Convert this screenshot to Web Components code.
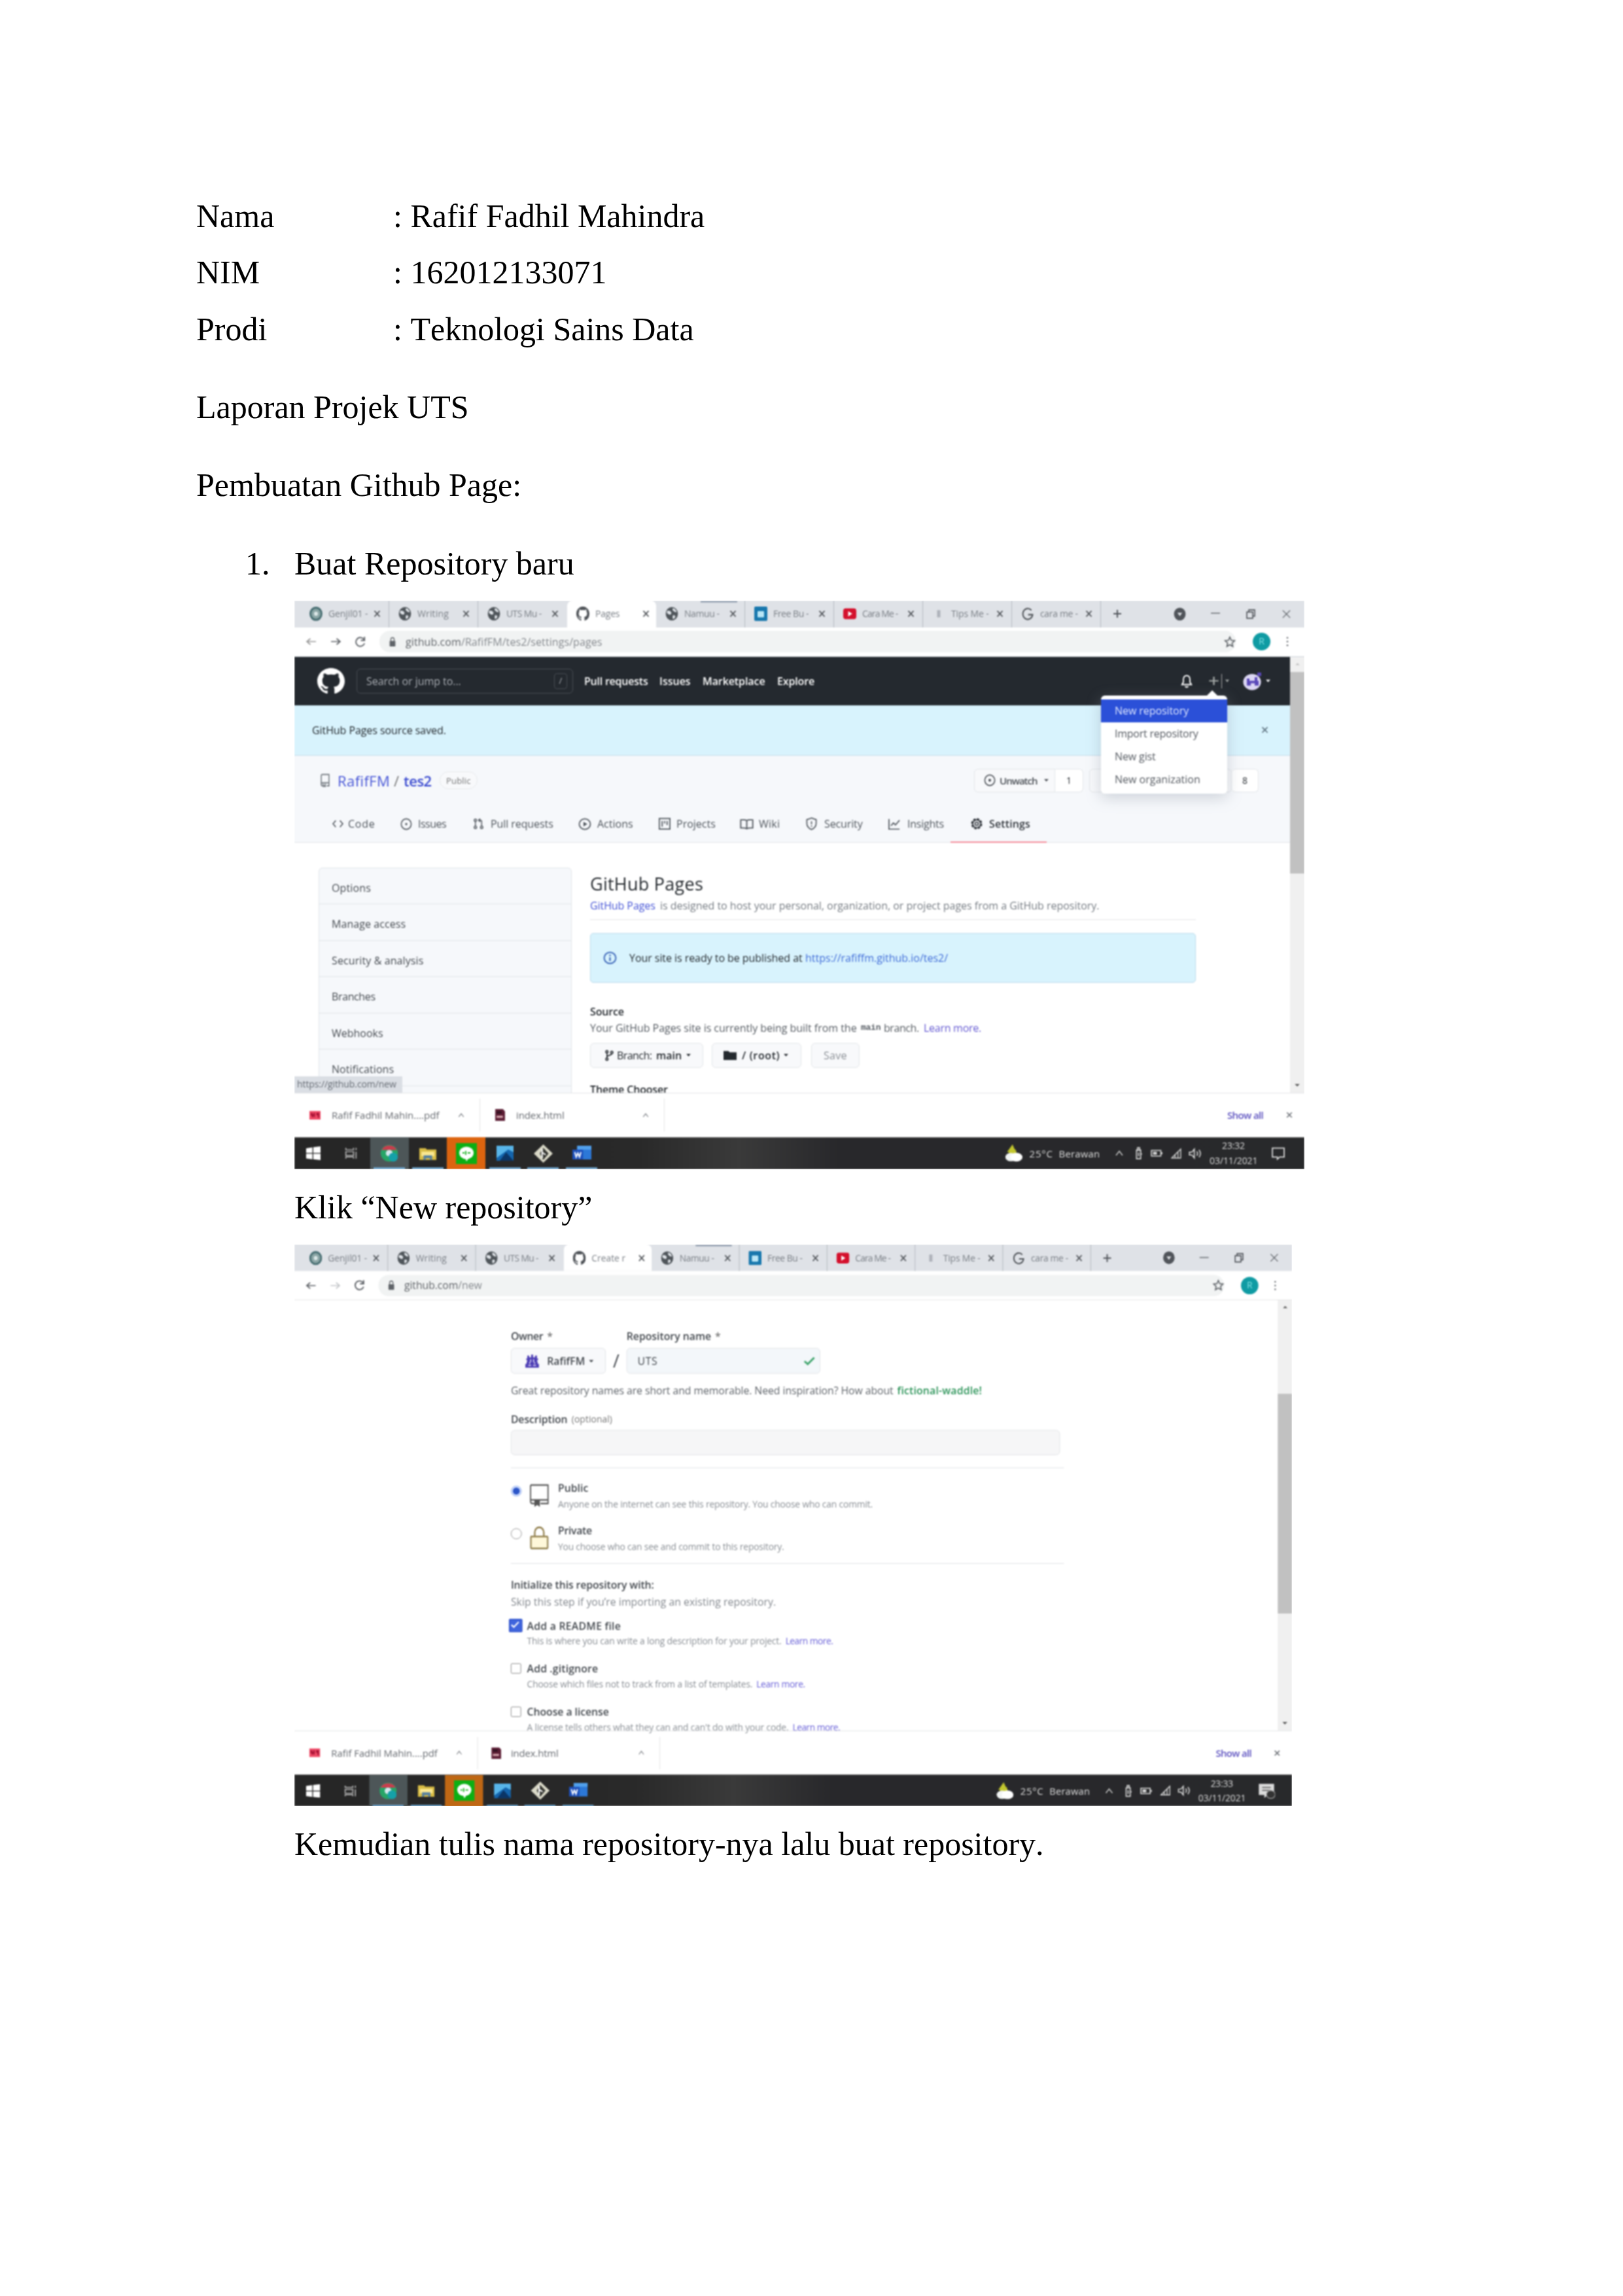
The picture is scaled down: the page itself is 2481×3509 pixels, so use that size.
<!DOCTYPE html>
<html lang="id">
<head>
<meta charset="utf-8">
<title>Laporan Projek UTS</title>
<style>
body{margin:0;background:#fff;width:2481px;height:3509px;overflow:hidden}
</style>
</head>
<body>
<report-page>
  <meta-line label="Nama">: Rafif Fadhil Mahindra</meta-line>
  <meta-line label="NIM">: 162012133071</meta-line>
  <meta-line label="Prodi">: Teknologi Sains Data</meta-line>
  <doc-para>Laporan Projek UTS</doc-para>
  <doc-para>Pembuatan Github Page:</doc-para>
  <doc-step number="1.">
    <span slot="title">Buat Repository baru</span>
    <browser-shot kind="settings"><settings-view></settings-view></browser-shot>
    <doc-caption>Klik “New repository”</doc-caption>
    <browser-shot kind="new"><new-repo-view></new-repo-view></browser-shot>
    <doc-caption>Kemudian tulis nama repository-nya lalu buat repository.</doc-caption>
  </doc-step>
</report-page>
<script>
const make = (name, html, after) => customElements.define(name, class extends HTMLElement {
  constructor(){ super(); this.attachShadow({mode:'open'}); }
  connectedCallback(){
    this.shadowRoot.innerHTML = typeof html === 'function' ? html(this) : html;
    if (after) after(this);
  }
});

/* ---------- document ---------- */
make('report-page', `<style>:host{display:flex;flex-direction:column;box-sizing:border-box;width:2481px;height:3509px;padding:287px 300px 0;background:#fff;color:#000;font:50px/86.3px "Liberation Serif",serif;font-variant-ligatures:none;font-kerning:none}</style><slot></slot>`);
make('meta-line', el => `<style>:host{display:flex;height:86.3px;white-space:pre}b{font-weight:400;width:301px}</style><b>${el.getAttribute('label')}</b><slot></slot>`);
make('doc-para', `<style>:host{display:block;margin-top:33px;height:86.3px}</style><slot></slot>`);
make('doc-step', el => `<style>:host{display:block;margin-top:34px}.h{display:flex;height:86px;margin-bottom:13.500px}.n{width:75px;padding-left:75px}.b{padding-left:150px;display:flex;flex-direction:column;align-items:flex-start}</style><div class="h"><span class="n">${el.getAttribute('number')}</span><slot name="title"></slot></div><div class="b"><slot></slot></div>`);
make('doc-caption', `<style>:host{display:block;height:86px;margin:15px 0 14px;white-space:nowrap}</style><slot></slot>`);

/* ---------- icons ---------- */
const S = (d, w=1.5, x='') => `<path d="${d}" fill="none" stroke="currentColor" stroke-width="${w}" ${x}/>`;
const F = (d, c='currentColor') => `<path d="${d}" fill="${c}"/>`;
const ICONS = {
  mark: F('M8 0C3.58 0 0 3.58 0 8c0 3.54 2.29 6.53 5.47 7.59.4.07.55-.17.55-.38 0-.19-.01-.82-.01-1.49-2.01.37-2.53-.49-2.69-.94-.09-.23-.48-.94-.82-1.13-.28-.15-.68-.52-.01-.53.63-.01 1.08.58 1.23.82.72 1.21 1.87.87 2.33.66.07-.52.28-.87.51-1.07-1.78-.2-3.64-.89-3.64-3.95 0-.87.31-1.59.82-2.15-.08-.2-.36-1.02.08-2.12 0 0 .67-.21 2.2.82.64-.18 1.32-.27 2-.27.68 0 1.36.09 2 .27 1.53-1.04 2.2-.82 2.2-.82.44 1.1.16 1.92.08 2.12.51.56.82 1.27.82 2.15 0 3.07-1.87 3.75-3.65 3.95.29.25.54.73.54 1.48 0 1.07-.01 1.93-.01 2.2 0 .21.15.46.55.38A8.013 8.013 0 0016 8c0-4.42-3.58-8-8-8z'),
  x: S('M3 3l10 10M13 3L3 13',2),
  thinx: S('M2 2l12 12M14 2L2 14',1.2),
  ring: `<circle cx="8" cy="8" r="6.8" fill="#8aa5a5" stroke="#456c70" stroke-width="2.2"/><circle cx="8" cy="8" r="2.4" fill="#dce8e8"/>`,
  globe: `<circle cx="8" cy="8" r="7.5" fill="#4f555a"/>`+F('M2 5c2-1 4 0 5 1s0 3-1 3-3-1-4-2zM9 2c3 0 4 2 5 4-2 1-4-1-5-2zM9 10c2-1 4 0 3 2s-3 2-3 1z','#dfe3e8'),
  blue: `<rect width="16" height="16" rx="1.5" fill="#1777ad"/><rect x="4" y="5" width="8" height="7" rx="1" fill="#b9e6f6"/>`,
  yt: `<rect y="2" width="16" height="12" rx="3" fill="#d4102c"/>`+F('M6 5l5 3-5 3z','#fff'),
  dots: `<rect x="6" y="4" width="4" height="8" fill="#aeb2ba"/>`,
  goog: S('M12.5 4.2A6 6 0 1 0 14 9H8.5',1.5),
  plus: S('M8 2v12M2 8h12',2),
  disc: `<circle cx="8" cy="8" r="7.5" fill="currentColor"/>`+F('M5 6.5h6L8 10.5z','#dfe2e6'),
  min: S('M1 7h14',1.4),
  restore: S('M2 5h9v9H2zM5 5V2h9v9h-3',1.6),
  back: S('M15 8H2M7 3L2 8l5 5',1.8),
  fwd: S('M1 8h13M9 3l5 5-5 5',1.8),
  reload: S('M13.5 10A6 6 0 1 1 13 5M13.5 1v5h-5',1.7),
  padlock: `<rect x="3" y="6.5" width="10" height="8.5" rx="1" fill="currentColor"/>`+S('M5 7V4.500a3 3 0 0 1 6 0V7',1.5),
  star: S('M8 1.500l1.900 4.300 4.600.5-3.400 3.200.9 4.700L8 11.800l-4 2.400.9-4.700L1.500 6.300l4.600-.5z',1.5),
  kebab: `<circle cx="8" cy="2.500" r="1.200" fill="currentColor"/><circle cx="8" cy="8" r="1.200" fill="currentColor"/><circle cx="8" cy="13.500" r="1.200" fill="currentColor"/>`,
  bell: S('M8 1.800a4 4 0 0 0-4 4V9l-1.700 2.800h11.400L12 9V5.800a4 4 0 0 0-4-4zM6.300 13.500a1.800 1.800 0 0 0 3.400 0',1.5),
  caret: F('M3 5.500h10L8 11z'),
  repo: S('M2.700 13V2.700A1.500 1.500 0 0 1 4.200 1.200h9V14.500h-3M2.700 12.500c0-1 .7-1.500 1.500-1.500h9M2.700 12.500c0 1.200.7 2 1.800 2M5.500 12v3.500l1.400-1 1.400 1V12',1.3),
  bigrepo: S('M.8 1h14.400v12.700H9M.8 1v11.200c0 1 .6 1.500 1.800 1.500H4M.8 11.200h14.400',1)+F('M4 11.500h4.500V16l-2.200-1.400L4 16z'),
  code: S('M5 3L1 8l4 5M11 3l4 5-4 5',1.5),
  issue: `<circle cx="8" cy="8" r="1.400" fill="currentColor"/><circle cx="8" cy="8" r="6.800" fill="none" stroke="currentColor" stroke-width="1.400"/>`,
  pr: `<g fill="none" stroke="currentColor" stroke-width="1.400"><circle cx="3.500" cy="3.200" r="1.700"/><circle cx="3.500" cy="12.800" r="1.700"/><circle cx="12.500" cy="12.800" r="1.700"/><path d="M3.500 5v6M12.500 11V5q0-1.800-1.800-1.800H8.500M10.300 1L8 3.200l2.300 2.200"/></g>`,
  play: `<circle cx="8" cy="8" r="6.800" fill="none" stroke="currentColor" stroke-width="1.400"/>`+F('M6.300 5v6l4.800-3z'),
  proj: S('M1.500 1.500h13v13h-13zM5 4.500v7M8 4.500v3M11 4.500v5',1.400),
  book: S('M8 3.500C6.500 2.300 4 2.300 1 2.500v10.500c3-.2 5.500-.2 7 1 1.500-1.200 4-1.200 7-1V2.500c-3-.2-5.500-.2-7 1zM8 3.500V14',1.400),
  shield: S('M8 1L2 3v4.500c0 3.500 2.500 6 6 7.500 3.500-1.500 6-4 6-7.500V3zM8 5v3.500M8 10v1.500',1.400),
  graph: S('M1.500 1.500v13h13M4 10l3-3.500 2.500 2.500 5-6',1.400),
  gear: `<circle cx="8" cy="8" r="5.500" fill="none" stroke="currentColor" stroke-width="2.600" stroke-dasharray="2.900 1.420"/><circle cx="8" cy="8" r="4.800" fill="none" stroke="currentColor" stroke-width="1.300"/><circle cx="8" cy="8" r="2" fill="none" stroke="currentColor" stroke-width="1.300"/>`,
  eye: `<circle cx="8" cy="8" r="6.800" fill="none" stroke="currentColor" stroke-width="1.400"/><circle cx="8" cy="8" r="1.800" fill="currentColor"/>`,
  info: `<circle cx="8" cy="8" r="6.800" fill="none" stroke="currentColor" stroke-width="1.500"/>`+S('M8 4v1.700M8 7.200v4.500',1.700),
  branch: `<g fill="none" stroke="currentColor" stroke-width="1.500"><circle cx="4.500" cy="3" r="1.600"/><circle cx="4.500" cy="13" r="1.600"/><circle cx="11.500" cy="4" r="1.600"/><path d="M4.500 4.600v6.800M11.500 5.600c0 3-7 1.500-7 4.500"/></g>`,
  folder: F('M0 2h6l1.500 2H16v11H0z'),
  check: S('M2 8.500l4 4L14 3.500',2.400),
  lock: `<rect x="1.500" y="7" width="13" height="8.200" rx=".5" fill="#fff8da" stroke="#93814f" stroke-width="1.100"/><path d="M4.500 7V4.200a3.500 3.500 0 0 1 7 0V7" fill="none" stroke="#93814f" stroke-width="1.200"/>`,
  avatar: F('M3 2h2v2h2V1h2v3h2V2h2v3h1v2h-1l1 4h1v4H1v-4h1l1-4H2V5h1z','#4b3cb4')+F('M6 6h1v3H6zM9 6h1v3H9zM4 12h3v1H4zM9 12h3v1H9zM5 9h1v2H5zM10 9h1v2h-1z','#efeafc'),
  face: `<circle cx="7" cy="9" r="6.800" fill="#dcd7f4"/>`+F('M3 6h2v2h4V5h2v3h1v4H9v-2H6v2H3z','#5947b8')+F('M11 1h3v3h-3z','#5947b8'),
  up: S('M3 11l5-6 5 6',1.300),
  pdf: F('M0 1h16v14H0z','#ef4a66')+F('M2 4h2l2 4V4h2v8L6 9l-1 3-3-4zM10 4h4v8h-2V8h-2z','#a61135'),
  html: F('M1 0h11l3 3v13H1z','#5b1c33')+F('M3 9h9v3H3z','#d3a4ac')+F('M3 3h7v3H3z','#2e1220'),
  win: F('M0 2.200l7-1v6.500H0zM8 1l8-1v7.700H8zM0 8.600h7v6.400l-7-1zM8 8.600h8V16l-8-1z','#fff'),
  task: S('M2 1v2.500h9V1M2 6h9v5H2zM2 15v-2.200h9V15M14 1v3M14 6v9',1.200),
  chrome: `<circle cx="8" cy="8" r="7.500" fill="#27a567"/>`+F('M1.300 5A7.500 7.500 0 0 1 14.700 5H8z','#c93c4d')+`<circle cx="8" cy="8" r="3" fill="#d6e7ee"/><circle cx="11.500" cy="11.500" r="4" fill="#15a0a8"/>`,
  files: F('M0 2h6l1 1.500h9V15H0z','#d9bd45')+F('M2 6h12v5H2z','#fbe892')+F('M4 10h8v5h-2v-2H6v2H4z','#547fa0'),
  line: `<rect width="16" height="16" fill="#0caf13"/><ellipse cx="8" cy="7.500" rx="5.500" ry="4.700" fill="#fff"/>`+F('M7 11h3l-2 3z','#fff')+S('M5 7.500h1.500M7.500 6v3M9 7.500h2',.9,'style="color:#0caf13"'),
  photos: F('M0 0h16v16H0z','#1465ad')+F('M0 0h16v7L11 4 0 13z','#58b5e9')+F('M3 16l6-9 7 9z','#0b3566'),
  git: F('M8 0l8 8-8 8-8-8z','#dad9c8')+F('M8 3l4.500 5L8 13.500 5 8z','#343530')+S('M7 4v8M7 7l3 2',1.200,'style="color:#fff"'),
  word: F('M4 0h12v14H4z','#2c78d7')+F('M0 4h9v10H0z','#1c4fbb')+S('M2 6.500l1.200 5L4.600 7.500 6 11.500 7.200 6.500',1.100,'style="color:#fff"')+F('M4 0h12v4H4z','#51a0ec'),
  weather: F('M7 0l3 7H2z','#c2c62e')+`<circle cx="7" cy="7" r="3.500" fill="#c2c62e"/><ellipse cx="5.500" cy="11.500" rx="5" ry="3.800" fill="#f2f5f4"/><ellipse cx="10.500" cy="11.500" rx="5.500" ry="4" fill="#fff"/>`,
  usb: S('M5 4h6v11H5zM6.500 4V1h3v3M8 7v5M11 9h2',1.500),
  batt: S('M1 4h12v8H1zM14.500 6.500v3',1.400)+F('M3 6h5v4H3z'),
  net: S('M1 14L14 2v12zM6 14v-4M10 14V6',1.300),
  vol: S('M1 6h3l3-4v12l-3-4H1zM10 5q1.800 3 0 6M12.800 3q3.200 5 0 10',1.300),
  note: S('M1.500 2h13v10.500H9.500L7 15v-2.500H1.500z',1.300),
  noteOn: F('M1 1h14v11H9l-3 3v-3H1z')+S('M4 4.500h8M4 7.500h8',1,'style="color:#555"')+`<circle cx="12" cy="11.500" r="4" fill="#333" stroke="#aaa" stroke-width=".8"/>`,
};
make('ui-icon', el => {
  const w = el.getAttribute('w') || 18, h = el.getAttribute('h') || w;
  return `<style>:host{display:block;flex:none;width:${w}px;height:${h}px}svg{display:block}</style><svg width="${w}" height="${h}" viewBox="0 0 16 16" preserveAspectRatio="none">${ICONS[el.getAttribute('n')]}</svg>`;
});
const I = (n,w,h,m=0,s='') => `<ui-icon n="${n}" w="${w}" h="${h||w}" style="margin-left:${m}px;${s}"></ui-icon>`;
const T = (t,w,m=0,s='') => `<fit-text w="${w}" style="margin-left:${m}px;${s}">${t}</fit-text>`;

/* ---------- browser frame ---------- */
const tabs = k => [['ring','Genjil01 -',60],['globe','Writing',48],['globe','UTS Mu -',54],['mark',k?'Pages':'Create r',k?37:52],['globe','Namuu -',54],['blue','Free Bu -',54],['yt','Cara Me -',54],['dots','Tips Me -',58],['goog','cara me -',58]].map(([ic,t,w],i) =>
  `<div class="tab ${i===3?'on':''}">${I(ic,20,22,14)}${T(t,w,9)}${I('x',13,14,(i===3?71:68)-w)}</div>`).join('');
make('browser-shot', el => {
  const k = el.getAttribute('kind') === 'settings';
  return `<style>
  :host{display:block;flex:none;width:${k?1544:1525}px;height:${k?869:858}px;overflow:hidden}
  *{box-sizing:border-box}
  .frame{width:1544px;height:869px;display:flex;flex-direction:column;background:#fff;transform-origin:0 0;transform:scale(${k?1:'.9877'});filter:blur(.9px);font:16px/20px "Open Sans",sans-serif;font-kerning:auto;color:#24292e}
  .tabs{height:41px;flex:none;display:flex;align-items:center;background:#dfe2e7;padding-left:9px;color:#50545a;font-size:14px}
  .tab{width:136px;height:41px;display:flex;align-items:center;border-right:1px solid #b4b9bf;color:#7b8087}
  .tab ui-icon{color:#4d5156}
  .tab:nth-child(3){border:0}
  .tab.on{background:#fff;border:0;border-radius:8px 8px 0 0}
  .tab:nth-child(5){background:linear-gradient(#9da8b7,#9da8b7) 68px 0/56px 3px no-repeat}
  .bar{height:45px;flex:none;display:flex;align-items:center;color:#5f6368;padding-left:17px;border-bottom:1px solid ${k?'#cfd5da':'#e6e6e6'}}
  .url{margin-left:20px;width:1309px;height:33px;border-radius:16px;background:#f1f3f3;display:flex;align-items:center}
  .me{width:27px;height:27px;border-radius:50%;background:#0f9ba3;margin-left:26px;color:#7fe0e4;font-size:14px;line-height:26px;text-align:center}
  .mid{height:666px;flex:none;display:flex}
  .view{width:1522px;height:666px;${k?'overflow:hidden':''}}
  .scroll{width:22px;background:#f0f0f0;display:flex;flex-direction:column;align-items:center;color:#666}
  .thumb{width:22px;background:#c1c1c1;height:${k?308:340}px;margin-top:${k?7:129}px}
  .dl{height:68px;flex:none;display:flex;align-items:center;border-top:1px solid #e3e4e6;color:#666a70;font-size:15px}
  .dl i{width:1px;height:50px;background:#e4e4e4}
  .tb{height:49px;flex:none;display:flex;align-items:center;background:linear-gradient(90deg,#262626 0,#292929 34%,#3a3a3a 44%,#28282b 54%,#28292b);color:#dcdcdc;font-size:15px;border-top:1px solid #555}
  .ap{width:58.8px;height:49px;display:flex;align-items:center;justify-content:center}
  .run{background:linear-gradient(#6da3cb,#6da3cb) 50% 100%/48px 3px no-repeat}
  .clock{width:76px;margin-left:11px;display:flex;flex-direction:column;align-items:center;font-size:14px}
  .bubble{position:absolute;left:0;top:727px;width:165px;height:25px;background:#dadee4;display:flex;align-items:center;font-size:14px;color:#666c74}
  </style><div class="frame">
  <div class="tabs">${tabs(k)}${I('plus',16,16,17)}${I('disc',19,21,78)}${I('min',16,14,37)}${I('restore',16,17,38)}${I('thinx',15,15,39)}</div>
  <div class="bar">${I('back',17,15,0,k?'color:#999':'')}${I('fwd',17,15,21,k?'':'color:#c5c7ca')}${I('reload',18,18,20)}
    <div class="url">${I('padlock',14,16,13)}${k?T('github.com<span style="color:#85898e">/RafifFM/tes2/settings/pages</span>',300,13):T('github.com<span style="color:#85898e">/new</span>',120,13)}${I('star',18,18,k?951:1131)}</div>
    <div class="me">R</div>${I('kebab',16,17,18)}</div>
  <div class="mid"><div class="view"><slot></slot></div><div class="scroll">${I('caret',11,10,0,`transform:rotate(180deg);margin-top:6px;color:${k?'#c4c4c4':'#555'}`)}<div class="thumb"></div>${I('caret',12,11,0,'margin-top:auto;margin-bottom:6px;color:#555')}</div></div>
  <div class="dl">${I('pdf',17,15,23)}${T('Rafif Fadhil Mahin....pdf',164,17)}${I('up',12,13,28)}<i style="margin-left:22px"></i>${I('html',17,18,k?22:20)}${T('index.html',74,k?16:14)}${I('up',12,13,k?118:122)}<i style="margin-left:22px"></i>${T('Show all',55,860,'color:#5b50bf;font-weight:600')}${I('x',12,12,34)}</div>
  <div class="tb"><span class="ap" style="width:57px">${I('win',22,21)}</span><span class="ap">${I('task',21,19,0,'color:#bbb')}</span><span class="ap run" style="background-color:#4d5658">${I('chrome',28,27)}</span><span class="ap run">${I('files',26,22)}</span><span class="ap" style="background:${k?'#dc640f':'#bf6714'}">${I('line',32,32)}</span><span class="ap run">${I('photos',26,23)}</span><span class="ap run">${I('git',29,28)}</span><span class="ap run">${I('word',29,24)}</span>
    ${I('weather',27,27,617)}${T('25°C',36,11)}${T('Berawan',63,9)}${I('up',16,17,21)}${I('usb',17,19,13)}${I('batt',19,17,10)}${I('net',17,18,12)}${I('vol',20,18,10)}
    <div class="clock">${T(k?'23:32':'23:33',35,0,'height:23px')}${T('03/11/2021',73)}</div>${I(k?'note':'noteOn',k?22:27,k?21:25,k?19:17)}</div>
  ${k?`<div class="bubble">${T('https://github.com/new',152,4)}</div>`:''}
  </div>`;
});

/* ---------- repository settings ---------- */
make('settings-view', `<style>
  :host{display:block;width:1522px}*{box-sizing:border-box}
  .hd{height:74px;background:#24292f;display:flex;align-items:center;color:#fff;font-weight:600}
  .q{width:331px;height:38px;border:1px solid #474c53;border-radius:6px;margin-left:18px;display:flex;align-items:center;color:#a9adb3;font-weight:400}
  .fl{height:77px;background:#d8f3fd;border-bottom:1px solid #c5dcea;display:flex;align-items:center}
  .rp{height:133px;background:#f6f8fb;border-bottom:1px solid #e3e6e9}
  .t{height:76px;display:flex;align-items:center}
  .n{height:57px;display:flex;align-items:center;color:#4f555c}
  .btn{height:36px;border:1px solid #e3e6e9;border-radius:6px;background:#f8f9fb;display:flex;align-items:center;flex:none}
  .bd{display:flex}
  .side{margin:38px 0 0 37px;width:387px;border:1px solid #e1e5e9;border-radius:6px 6px 0 0;background:#f6f8fb}
  .side div{height:55.5px;border-bottom:1px solid #e1e5e9;display:flex;align-items:center;padding-left:19px;padding-top:5px;color:#464b51}
  .m{margin:43px 0 0 28px;width:926px}.r{display:flex;align-items:center}
  .menu{position:absolute;left:1233px;top:145px;width:193px;height:150px;background:#fff;border-radius:6px;box-shadow:0 6px 22px #8c95a566;padding-top:6px;color:#555a61}
  .menu div{height:35px;display:flex;align-items:center}
  .menu::before{content:"";position:absolute;left:162px;top:-8px;border:8px solid transparent;border-top:0;border-bottom-color:#fff}
  .a{color:#4554d6}
  </style>
  <div class="hd">${I('mark',42,40,35)}<div class="q">${T('Search or jump to...',145,14)}<span style="margin-left:142px;width:20px;height:24px;border:1px solid #474c53;border-radius:4px;text-align:center;font-size:13px">/</span></div>${T('Pull requests',97,17)}${T('Issues',48,18)}${T('Marketplace',96,18)}${T('Explore',57,18)}${I('bell',20,22,559)}${I('plus',19,17,22,'color:#a5aaa8')}<span style="width:1px;height:22px;background:#aaa;margin-left:2px"></span>${I('caret',10,11,3,'color:#a5aaa8')}${I('face',32,29,19)}${I('caret',11,11,1)}</div>
  <div class="fl">${T('GitHub Pages source saved.',205,27)}${I('x',13,13,1245,'color:#5e7280')}</div>
  <div class="rp"><div class="t">${I('repo',18,21,38,'color:#6a7077')}${T('RafifFM',80,10,'font-size:22px;color:#4554d6')}<span style="font-size:22px;margin:0 0 0 6px;width:10px;color:#777">/</span>${T('tes2',43,5,'font-size:22px;font-weight:600;color:#3b4bd0')}<span class="btn" style="height:27px;border-radius:14px;margin-left:12px;padding:0 9px;border-color:#e8eaec;color:#777;font-size:13px">${T('Public',38)}</span>
   <div class="btn" style="width:124px;margin-left:759px;border-radius:6px 0 0 6px;font-weight:600;font-size:15px;color:#4a4f55">${I('eye',18,19,14)}${T('Unwatch',58,6)}${I('caret',11,11,8)}</div><div class="btn" style="width:43px;background:#fff;border-left:0;border-radius:0 6px 6px 0;justify-content:center;font-size:14px">1</div><div class="btn" style="width:218px;margin-left:9px"></div><div class="btn" style="width:41px;border-left:0;background:#fff;justify-content:center;font-size:14px">8</div></div>
   <div class="n">${I('code',17,16,58)}${T('Code',41,7)}${I('issue',18,19,39)}${T('Issues',43,9)}${I('pr',17,18,41)}${T('Pull requests',96,10)}${I('play',20,19,38)}${T('Actions',55,9)}${I('proj',20,20,38)}${T('Projects',60,8)}${I('book',21,19,37)}${T('Wiki',32,8)}${I('shield',19,20,39)}${T('Security',59,10)}${I('graph',20,19,38)}${T('Insights',56,10)}<span class="r" style="margin-left:10px;width:147px;height:57px;border-bottom:2px solid #f58a97;padding-top:2px;font-weight:600;color:#30353b">${I('gear',20,20,30)}${T('Settings',63,9)}</span></div></div>
  <div class="bd"><div class="side"><div>${T('Options',60)}</div><div>${T('Manage access',113)}</div><div>${T('Security &amp; analysis',140)}</div><div>${T('Branches',67)}</div><div>${T('Webhooks',79)}</div><div>${T('Notifications',95)}</div><div></div></div>
  <div class="m">
   <div class="r" style="height:40px;font-size:27px">${T('GitHub Pages',173)}</div>
   <div class="r" style="height:35px;padding-bottom:7px;border-bottom:1px solid #e2e4e7;margin-bottom:20px;color:#777d84"><span class="a">${T('GitHub Pages',100)}</span>${T('is designed to host your personal, organization, or project pages from a GitHub repository.',671,7)}</div>
   <div class="r" style="height:76px;background:#d8f3fd;border:1px solid #bcdceb;border-radius:5px">${I('info',21,20,19,'color:#3a64b8')}${T('Your site is ready to be published at',265,19)}${T('https://rafiffm.github.io/tes2/',218,4,'color:#3f6bd8')}</div>
   <div class="r" style="height:24px;margin-top:32px;font-weight:600">${T('Source',52)}</div>
   <div class="r" style="height:26px;color:#555b62">${T('Your GitHub Pages site is currently being built from the',408)}${T('main',30,6,'font:600 13px \'Liberation Mono\',monospace')}${T('branch.',54,5)}${T('Learn more.',88,7,'color:#6459d2')}</div>
   <div class="r" style="margin-top:10px"><div class="btn" style="height:38px;width:173px">${I('branch',17,18,20)}${T('Branch:',53,3)}${T('main',39,7,'font-weight:600')}${I('caret',11,11,5)}</div><div class="btn" style="height:38px;width:137px;margin-left:13px">${I('folder',20,17,17)}${T('/ (root)',58,8,'font-weight:600')}${I('caret',11,11,4)}</div><div class="btn" style="height:38px;width:74px;margin-left:15px;color:#8b9096">${T('Save',36,18)}</div></div>
   <div class="r" style="height:26px;margin-top:20px;font-weight:600">${T('Theme Chooser',119)}</div>
  </div></div>
  <div class="menu"><div style="background:#2b50d8;color:#dfe7ff">${T('New repository',113,21)}</div><div>${T('Import repository',128,21)}</div><div>${T('New gist',63,21)}</div><div>${T('New organization',131,21)}</div></div>`);

/* ---------- new repository form ---------- */
const opt = (mt, on, t, tw, s, sw, l, lw) => `<div class="r" style="margin-top:${mt}px;height:24px"><span class="cb ${on?'on':''}">${on?I('check',15,14):''}</span><b>${T(t,tw)}</b></div><div class="r sub" style="padding-left:25px">${T(s,sw)}${T(l,lw,6,'color:#6a62d8')}</div>`;
make('new-repo-view', `<style>
  :host{display:block;padding:44px 0 0 335px;width:1522px;box-sizing:border-box;color:#42474d}*{box-sizing:border-box}
  .r{display:flex;align-items:center}b{font-weight:600}
  .box{height:40px;border:1px solid #e2e4e7;border-radius:6px;background:#f8f9fb;display:flex;align-items:center;flex:none}
  hr{border:0;height:1px;background:#dfe1e4;margin:0;width:856px}
  .sub{height:23px;color:#8a8f95;font-size:14px}
  .cb{width:16px;height:16px;border:1px solid #8b8b8b;border-radius:2px;margin-right:9px;flex:none}
  .cb.on{width:21px;height:21px;background:#3f64dd;color:#fff;border:2px solid #3659cf;margin:-2px 7px 0 -3px}
  .rd{width:17px;height:17px;border-radius:50%;border:1px solid #999;flex:none}
  .rd.on{background:radial-gradient(#2b55c8 0 45%,#c8d7fb 55%);border-color:#a9bff0}
  </style>
  <div class="r" style="height:24px;font-weight:600">${T('Owner',50)}<span style="margin-left:6px;width:8px;color:#777">*</span>${T('Repository name',131,115)}<span style="margin-left:6px;color:#777">*</span></div>
  <div class="r" style="margin-top:6px"><div class="box" style="width:147px">${I('avatar',24,23,20)}<b>${T('RafifFM',59,11)}</b>${I('caret',11,11,4)}</div><span style="font-size:27px;margin:0 0 0 11px;width:21px">/</span><div class="box" style="width:300px;background:#f3f7fa">${T('UTS',31,16)}${I('check',20,18,225,'color:#3ba369')}</div></div>
  <div class="r" style="margin-top:13px;height:26px;color:#60656b">${T('Great repository names are short and memorable. Need inspiration? How about',592)}<b style="color:#2b9358">${T('fictional-waddle!',131,6)}</b></div>
  <div class="r" style="margin-top:18px;height:26px"><b>${T('Description',88)}</b>${T('(optional)',63,6,'font-size:14px;color:#777')}</div>
  <div class="box" style="margin-top:4px;height:39px;width:850px;background:#f6f6f7"></div>
  <hr style="margin-top:19px">
  <div class="r" style="margin-top:21px"><span class="rd on" style="margin-top:-18px"></span>${I('bigrepo',30,36,12,'margin-top:-5px;color:#555')}<div style="margin-left:14px"><b style="display:flex;height:23px">${T('Public',47)}</b><div class="r sub">${T('Anyone on the internet can see this repository. You choose who can commit.',487)}</div></div></div>
  <div class="r" style="margin-top:20px"><span class="rd" style="margin-top:-18px"></span>${I('lock',32,36,11,'margin-top:-5px')}<div style="margin-left:13px"><b style="display:flex;height:23px">${T('Private',53)}</b><div class="r sub">${T('You choose who can see and commit to this repository.',350)}</div></div></div>
  <hr style="margin-top:14px">
  <div class="r" style="margin-top:21px;height:24px"><b>${T('Initialize this repository with:',222)}</b></div>
  <div class="r" style="height:27px;color:#84898f">${T('Skip this step if you’re importing an existing repository.',410)}</div>
  ${opt(12,1,'Add a README file',145,'This is where you can write a long description for your project.',394,'Learn more.',74)}
  ${opt(19,0,'Add .gitignore',110,'Choose which files not to track from a list of templates.',349,'Learn more.',76)}
  ${opt(20,0,'Choose a license',127,'A license tells others what they can and can\'t do with your code.',405,'Learn more.',74)}`);

/* Spreads a run of text over a given width with letter-spacing. */
make('fit-text', el => `<style>:host{display:block;flex:none;white-space:nowrap;width:${el.getAttribute('w')}px}span{display:inline-block}</style><span><slot></slot></span>`, el => {
  const s = el.shadowRoot.querySelector('span'), w = +el.getAttribute('w');
  s.style.letterSpacing = ((w - s.offsetWidth) / el.textContent.length).toFixed(3) + 'px';
});
</script>
</body>
</html>
